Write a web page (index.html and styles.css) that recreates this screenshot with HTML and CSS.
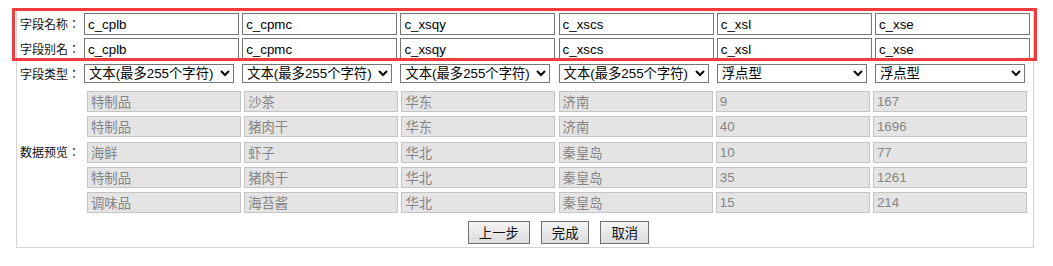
FILE: index.html
```html
<!DOCTYPE html>
<html lang="zh-CN">

<head>
  <meta charset="UTF-8">
  <title>字段设置</title>
  <link rel="stylesheet" href="styles.css">
</head>

<body>
  <div class="panel">
    <!-- field names and aliases, marked in red -->
    <div class="field-rows">
      <div class="row name-row">
        <label class="row-label">字段名称：</label>
        <input class="field" type="text" value="c_cplb">
        <input class="field" type="text" value="c_cpmc">
        <input class="field" type="text" value="c_xsqy">
        <input class="field" type="text" value="c_xscs">
        <input class="field" type="text" value="c_xsl">
        <input class="field" type="text" value="c_xse">
      </div>
      <div class="row name-row">
        <label class="row-label">字段别名：</label>
        <input class="field" type="text" value="c_cplb">
        <input class="field" type="text" value="c_cpmc">
        <input class="field" type="text" value="c_xsqy">
        <input class="field" type="text" value="c_xscs">
        <input class="field" type="text" value="c_xsl">
        <input class="field" type="text" value="c_xse">
      </div>
    </div>

    <div class="row type-row">
      <label class="row-label">字段类型：</label>
      <select class="type"><option>文本(最多255个字符)</option><option>浮点型</option></select>
      <select class="type"><option>文本(最多255个字符)</option><option>浮点型</option></select>
      <select class="type"><option>文本(最多255个字符)</option><option>浮点型</option></select>
      <select class="type"><option>文本(最多255个字符)</option><option>浮点型</option></select>
      <select class="type"><option>浮点型</option><option>文本(最多255个字符)</option></select>
      <select class="type"><option>浮点型</option><option>文本(最多255个字符)</option></select>
    </div>

    <div class="preview">
      <label class="row-label">数据预览：</label>
      <div class="preview-grid">
        <input class="cell" type="text" value="特制品" disabled>
        <input class="cell" type="text" value="沙茶" disabled>
        <input class="cell" type="text" value="华东" disabled>
        <input class="cell" type="text" value="济南" disabled>
        <input class="cell" type="text" value="9" disabled>
        <input class="cell" type="text" value="167" disabled>

        <input class="cell" type="text" value="特制品" disabled>
        <input class="cell" type="text" value="猪肉干" disabled>
        <input class="cell" type="text" value="华东" disabled>
        <input class="cell" type="text" value="济南" disabled>
        <input class="cell" type="text" value="40" disabled>
        <input class="cell" type="text" value="1696" disabled>

        <input class="cell" type="text" value="海鲜" disabled>
        <input class="cell" type="text" value="虾子" disabled>
        <input class="cell" type="text" value="华北" disabled>
        <input class="cell" type="text" value="秦皇岛" disabled>
        <input class="cell" type="text" value="10" disabled>
        <input class="cell" type="text" value="77" disabled>

        <input class="cell" type="text" value="特制品" disabled>
        <input class="cell" type="text" value="猪肉干" disabled>
        <input class="cell" type="text" value="华北" disabled>
        <input class="cell" type="text" value="秦皇岛" disabled>
        <input class="cell" type="text" value="35" disabled>
        <input class="cell" type="text" value="1261" disabled>

        <input class="cell" type="text" value="调味品" disabled>
        <input class="cell" type="text" value="海苔酱" disabled>
        <input class="cell" type="text" value="华北" disabled>
        <input class="cell" type="text" value="秦皇岛" disabled>
        <input class="cell" type="text" value="15" disabled>
        <input class="cell" type="text" value="214" disabled>
      </div>
    </div>

    <div class="actions">
      <button id="prevBtn">上一步</button>
      <button id="finishBtn">完成</button>
      <button id="cancelBtn">取消</button>
    </div>
  </div>
</body>

</html>
```

FILE: styles.css
```css
* {
  margin: 0;
  padding: 0;
  box-sizing: border-box;
}

body {
  background-color: white;
  font-family: "Liberation Sans", "Noto Sans CJK SC", sans-serif;
  color: #222;
}

.panel {
  margin: 9px 0 0 16px;
  width: 1018px;
  padding: 3px 0 3px 0;
  border: 1px solid #d4d4d4;
}

/* the red annotation box round the first two rows */
.field-rows {
  position: relative;
  display: flex;
  flex-direction: column;
  gap: 3px;
}

.field-rows::after {
  content: "";
  position: absolute;
  top: -5px;
  left: -5px;
  right: -4px;
  bottom: -1px;
  border: 3px solid #f03c3c;
  pointer-events: none;
}

.row {
  display: grid;
  grid-template-columns: 67px repeat(6, 158.2px);
  align-items: center;
}

/* centred full-width colon, as on the original page */
.row-label {
  padding-left: 3px;
  font-family: "Noto Sans CJK JP", "Noto Sans CJK SC", sans-serif;
  font-feature-settings: "locl" 0;
  font-size: 12px;
  line-height: 16px;
  color: #111;
  white-space: nowrap;
}

.field {
  width: 155px;
  height: 22px;
  padding: 0 3px;
  border: 1px solid #767676;
  font-family: "Liberation Sans", "Noto Sans CJK SC", sans-serif;
  font-size: 13.33px;
  color: black;
  background-color: white;
}

.type-row {
  margin-top: 4px;
}

.type {
  width: 150px;
  height: 19px;
  border: 1px solid #767676;
  border-radius: 0;
  font-family: "Liberation Sans", "Noto Sans CJK SC", sans-serif;
  font-size: 13.33px;
  color: black;
  background-color: white;
}

.preview {
  display: grid;
  grid-template-columns: 70px 1fr;
  align-items: center;
  margin-top: 8px;
}

.preview-grid {
  display: grid;
  grid-template-columns: repeat(6, 157.2px);
  row-gap: 4.3px;
}

.cell {
  width: 154px;
  height: 21px;
  padding: 0 3px;
  border: 1px solid #c4c4c4;
  background-color: #e4e4e4;
  font-family: "Liberation Sans", "Noto Sans CJK SC", sans-serif;
  font-size: 13.33px;
  color: #858585;
}

.actions {
  display: flex;
  justify-content: center;
  gap: 11px;
  margin: 8px 0 0 67px;
}

.actions button {
  height: 23px;
  padding: 0 10px;
  border: 1px solid #707070;
  background: linear-gradient(#f4f4f4, #dcdcdc);
  font-family: "Liberation Sans", "Noto Sans CJK SC", sans-serif;
  font-size: 13.33px;
  color: #111;
  cursor: pointer;
}

.actions button:hover {
  background: linear-gradient(#eaf4fc, #d4e8f8);
  border-color: #3c7fb1;
}
```
